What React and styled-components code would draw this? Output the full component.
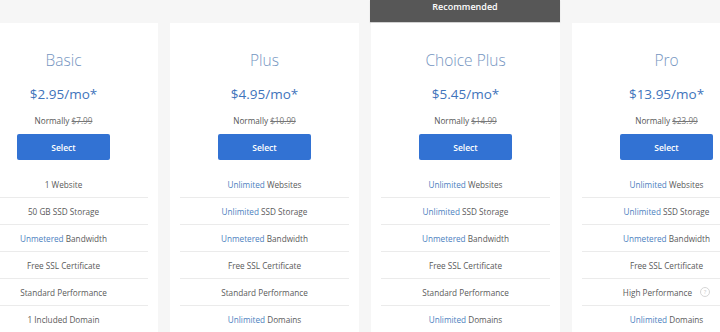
import React from "react";
import styled, { createGlobalStyle } from "styled-components";

const GlobalStyle = createGlobalStyle`
  body {
    margin: 0;
    background: #f6f6f6;
    font-family: "Open Sans", "Liberation Sans", sans-serif;
  }
`;

const SPage = styled.div`
  width: 720px;
  height: 332px;
  overflow: hidden;
  background: #f6f6f6;
`;

const SRow = styled.div`
  display: flex;
  gap: 12px;
  margin-left: -31px;
`;

const SColumn = styled.div`
  display: flex;
  flex-direction: column;
  flex: 0 0 189px;
`;

const SBanner = styled.div`
  height: 22px;
  margin-bottom: 1px;
  margin-left: ${(p) => (p.$show ? "-1px" : "0")};
  background: ${(p) => (p.$show ? "#575757" : "transparent")};
  box-shadow: ${(p) => (p.$show ? "0 1px 1px rgba(0,0,0,0.15)" : "none")};
  color: #fff;
  font-size: 9px;
  font-weight: 600;
  line-height: 13px;
  text-align: center;
`;

const SCard = styled.div`
  background: #fff;
  padding-top: 25px;
  height: 320px;
  text-align: center;
`;

const STitle = styled.h2`
  margin: 0;
  font-size: 15.5px;
  font-weight: 300;
  line-height: 24px;
  color: #7595c1;
`;

const SPrice = styled.div`
  margin-top: 12px;
  font-size: 13.5px;
  font-weight: 500;
  line-height: 20px;
  color: #3f74bb;
`;

const SNormally = styled.div`
  margin-top: 10px;
  font-size: 8.2px;
  line-height: 14px;
  color: #555;
  s {
    color: #777;
  }
`;

const SButton = styled.button`
  display: block;
  margin: 6px auto 0;
  width: 93px;
  height: 26px;
  border: none;
  border-radius: 2px;
  background: #3272d3;
  color: #fff;
  font-family: inherit;
  font-size: 8.5px;
  font-weight: 600;
`;

const SFeatures = styled.ul`
  list-style: none;
  margin: 11px 0 0;
  padding: 0 10px;
`;

const SFeature = styled.li`
  display: flex;
  align-items: center;
  justify-content: center;
  height: 26px;
  border-bottom: 1px solid #ebebeb;
  font-size: 8.2px;
  color: #5a5a5a;
  white-space: pre;
  &:last-child {
    border-bottom: none;
  }
  em {
    font-style: normal;
    color: #4c7fc0;
  }
`;

const SHelp = styled.span`
  display: inline-flex;
  align-items: center;
  justify-content: center;
  width: 8px;
  height: 8px;
  margin-left: 8px;
  border: 1px solid #d6d6d6;
  border-radius: 50%;
  font-size: 6px;
  color: #c8c8c8;
`;

const plans = [
  {
    name: "Basic",
    price: "$2.95/mo*",
    normal: "$7.99",
    features: [
      ["", "1 Website"],
      ["", "50 GB SSD Storage"],
      ["Unmetered", "Bandwidth"],
      ["", "Free SSL Certificate"],
      ["", "Standard Performance"],
      ["", "1 Included Domain"],
    ],
  },
  {
    name: "Plus",
    price: "$4.95/mo*",
    normal: "$10.99",
    features: [
      ["Unlimited", "Websites"],
      ["Unlimited", "SSD Storage"],
      ["Unmetered", "Bandwidth"],
      ["", "Free SSL Certificate"],
      ["", "Standard Performance"],
      ["Unlimited", "Domains"],
    ],
  },
  {
    name: "Choice Plus",
    price: "$5.45/mo*",
    normal: "$14.99",
    recommended: true,
    features: [
      ["Unlimited", "Websites"],
      ["Unlimited", "SSD Storage"],
      ["Unmetered", "Bandwidth"],
      ["", "Free SSL Certificate"],
      ["", "Standard Performance"],
      ["Unlimited", "Domains"],
    ],
  },
  {
    name: "Pro",
    price: "$13.95/mo*",
    normal: "$23.99",
    features: [
      ["Unlimited", "Websites"],
      ["Unlimited", "SSD Storage"],
      ["Unmetered", "Bandwidth"],
      ["", "Free SSL Certificate"],
      ["", "High Performance", true],
      ["Unlimited", "Domains"],
    ],
  },
];

function Plan({ plan }) {
  return (
    <SColumn>
      <SBanner $show={plan.recommended}>
        {plan.recommended ? "Recommended" : ""}
      </SBanner>
      <SCard>
        <STitle>{plan.name}</STitle>
        <SPrice>{plan.price}</SPrice>
        <SNormally>
          Normally <s>{plan.normal}</s>
        </SNormally>
        <SButton>Select</SButton>
        <SFeatures>
          {plan.features.map(([hl, text, help]) => (
            <SFeature key={text}>
              {hl && <em>{hl} </em>}
              <span>{text}</span>
              {help && <SHelp>?</SHelp>}
            </SFeature>
          ))}
        </SFeatures>
      </SCard>
    </SColumn>
  );
}

export default function App() {
  return (
    <SPage>
      <GlobalStyle />
      <SRow>
        {plans.map((p) => (
          <Plan key={p.name} plan={p} />
        ))}
      </SRow>
    </SPage>
  );
}
